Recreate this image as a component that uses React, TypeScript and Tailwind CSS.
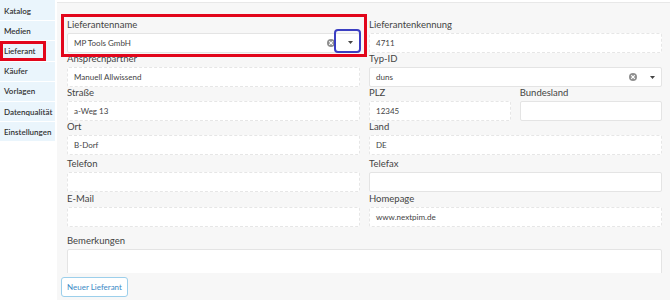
import { ReactNode } from "react";

const NAV = ["Katalog", "Medien", "Lieferant", "Käufer", "Vorlagen", "Datenqualität", "Einstellungen"];

function Label({ children, h }: { children: ReactNode; h: string }) {
  return (
    <div className={`flex items-end pb-[2px] text-[9.5px] leading-[12px] text-[#444] ${h}`}>
      {children}
    </div>
  );
}

function TextBox({ value, solid }: { value?: string; solid?: boolean }) {
  return (
    <div
      className={`flex h-[20px] items-center rounded-[2px] bg-white px-[6px] text-[8px] text-[#444] ${
        solid ? "border border-[#e4e4e4]" : "border border-dashed border-[#e6e6e6]"
      }`}
    >
      {value}
    </div>
  );
}

function ClearIcon() {
  return (
    <svg width="8" height="8" viewBox="0 0 8 8">
      <circle cx="4" cy="4" r="4" fill="#8f8f8f" />
      <path d="M2.6 2.6 5.4 5.4M5.4 2.6 2.6 5.4" stroke="#fff" strokeWidth="1.2" strokeLinecap="round" />
    </svg>
  );
}

function Caret() {
  return (
    <svg width="5" height="3" viewBox="0 0 5 3">
      <path d="M0 0h5L2.5 3z" fill="#444" />
    </svg>
  );
}

function SelectBox({ value, highlight }: { value: string; highlight?: boolean }) {
  return (
    <div className="relative flex h-[20px] items-center rounded-[2px] border border-[#e4e4e4] bg-white pl-[6px] text-[8px] text-[#444]">
      <span className="flex-1">{value}</span>
      <span className="mr-[13px] flex">
        <ClearIcon />
      </span>
      <span className="mr-[6px] flex w-[5px]">
        <Caret />
      </span>
      {highlight && (
        <div className="absolute right-[-2px] top-[-5px] h-[24px] w-[27px] rounded-[4px] border-2 border-[#3b3fc2]" />
      )}
    </div>
  );
}

export default function App() {
  return (
    <div
      className="flex h-[300px] w-[670px] overflow-hidden bg-white"
      style={{ fontFamily: 'Lato, "Open Sans", sans-serif' }}
    >
      <aside className="relative w-[55px] shrink-0">
        <div className="bg-[#eaf5fc] pt-[1px]">
          {NAV.map((item) => (
            <div
              key={item}
              className="flex h-[20.2px] items-center border-b border-white pl-[4px] text-[8px] font-semibold text-[#333]"
            >
              {item}
            </div>
          ))}
        </div>
        <div className="absolute left-0 top-[40.5px] h-[20px] w-[46px] border-[3px] border-[#e2061b]" />
      </aside>

      <main className="ml-[2px] flex flex-1 flex-col pt-[2px]">
        <div className="flex flex-1 flex-col border-t border-[#e8e8e8] bg-[#f7f7f7]">
          <div className="relative h-[270px] shrink-0 overflow-hidden pl-[10px] pr-[8px] pt-[0.5px]">
            <div className="grid grid-cols-2 gap-x-[9px]">
              <div>
                <Label h="h-[29px]">Lieferantenname</Label>
                <SelectBox value="MP Tools GmbH" highlight />
              </div>
              <div>
                <Label h="h-[29px]">Lieferantenkennung</Label>
                <TextBox value="4711" />
              </div>

              <div>
                <Label h="h-[14.5px]">Ansprechpartner</Label>
                <TextBox value="Manuell Allwissend" />
              </div>
              <div>
                <Label h="h-[14.5px]">Typ-ID</Label>
                <SelectBox value="duns" />
              </div>

              <div>
                <Label h="h-[14px]">Straße</Label>
                <TextBox value="a-Weg 13" />
              </div>
              <div className="grid grid-cols-2 gap-x-[8.5px]">
                <div>
                  <Label h="h-[14px]">PLZ</Label>
                  <TextBox value="12345" />
                </div>
                <div>
                  <Label h="h-[14px]">Bundesland</Label>
                  <TextBox solid />
                </div>
              </div>

              <div>
                <Label h="h-[14px]">Ort</Label>
                <TextBox value="B-Dorf" />
              </div>
              <div>
                <Label h="h-[14px]">Land</Label>
                <TextBox value="DE" />
              </div>

              <div>
                <Label h="h-[16.5px]">Telefon</Label>
                <TextBox />
              </div>
              <div>
                <Label h="h-[16.5px]">Telefax</Label>
                <TextBox solid />
              </div>

              <div>
                <Label h="h-[15px]">E-Mail</Label>
                <TextBox />
              </div>
              <div>
                <Label h="h-[15px]">Homepage</Label>
                <TextBox value="www.nextpim.de" />
              </div>

              <div className="col-span-2">
                <Label h="h-[22px]">Bemerkungen</Label>
                <div className="h-[60px] rounded-[2px] border border-[#e4e4e4] bg-white" />
              </div>
            </div>

            <div className="absolute left-[4px] top-[10.5px] h-[43.5px] w-[306px] border-[3px] border-[#e2061b]" />
          </div>

          <div className="flex pl-[4px] pt-[4px]">
            <button className="h-[20px] rounded-[3px] border border-[#9ccfeb] bg-white px-[5px] text-[8px] leading-none text-[#3d8ac6]">
              Neuer Lieferant
            </button>
          </div>
        </div>
      </main>
    </div>
  );
}
